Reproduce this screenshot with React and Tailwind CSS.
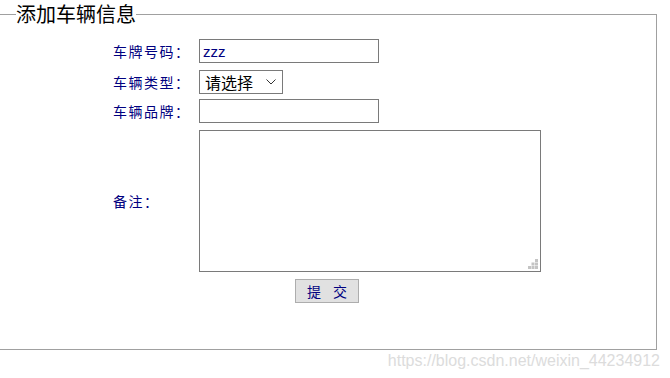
import React from 'react';

const labelCls = 'w-[86px] shrink-0 text-[14px] leading-[24px] tracking-[1.5px] text-[#000080]';

const App = () => {
  return (
    <div className="w-[670px] h-[378px] bg-white overflow-hidden font-['Noto_Sans_CJK_SC',sans-serif]">
      <fieldset className="ml-[-1px] w-[658px] h-[350px] border border-[#a0a0a0] pl-[16px] pr-0 pb-0 m-0">
        <legend className="px-0 text-[20px] leading-[28px] text-black">添加车辆信息</legend>

        {/* Form */}
        <div className="ml-[97px] w-[428px] pt-[11px] flex flex-col">
          <div className="flex items-center">
            <span className={labelCls}>车牌号码：</span>
            <input
              defaultValue="zzz"
              className="w-[180px] h-[24px] border border-[#7a7a7a] px-[3px] text-[15px] text-[#000080] font-['Liberation_Sans',sans-serif] outline-none"
            />
          </div>
          <div className="flex items-center mt-[7px]">
            <span className={labelCls}>车辆类型：</span>
            <div className="relative w-[84px] h-[24px] border border-[#7a7a7a] flex items-center pl-[5px]">
              <span className="text-[16px] leading-[22px] text-black">请选择</span>
              <svg className="absolute right-[6px] top-[8px]" width="10" height="6" viewBox="0 0 10 6" fill="none" stroke="#333" strokeWidth="1">
                <path d="M0.5 0.5L5 5L9.5 0.5" />
              </svg>
            </div>
          </div>
          <div className="flex items-center mt-[5px]">
            <span className={labelCls}>车辆品牌：</span>
            <input className="w-[180px] h-[24px] border border-[#7a7a7a] px-[3px] outline-none" />
          </div>
          <div className="flex items-center mt-[7px]">
            <span className={labelCls}>备注：</span>
            <div className="relative">
              <textarea className="block w-[342px] h-[142px] border border-[#7a7a7a] resize-none outline-none" />
              <svg className="absolute right-[3px] bottom-[3px]" width="10" height="10" viewBox="0 0 10 10" fill="#c4c4c4">
                <rect x="7" y="0" width="3" height="3" />
                <rect x="3.5" y="3.5" width="3" height="3" />
                <rect x="7" y="3.5" width="3" height="3" />
                <rect x="0" y="7" width="3" height="3" />
                <rect x="3.5" y="7" width="3" height="3" />
                <rect x="7" y="7" width="3" height="3" />
              </svg>
            </div>
          </div>
          <div className="flex justify-center mt-[7px]">
            <button className="w-[64px] h-[24px] bg-[#e1e1e1] border border-[#adadad] flex items-center justify-center gap-[12px] text-[14px] text-[#000080] leading-[22px] whitespace-nowrap">
              <span>提</span>
              <span>交</span>
            </button>
          </div>
        </div>
      </fieldset>
      <div className="text-right pr-[10px] pt-[1px] text-[16px] leading-[20px] text-[#dcdcdc] font-['Liberation_Sans',sans-serif]">
        https://blog.csdn.net/weixin_44234912
      </div>
    </div>
  );
};

export default App;
